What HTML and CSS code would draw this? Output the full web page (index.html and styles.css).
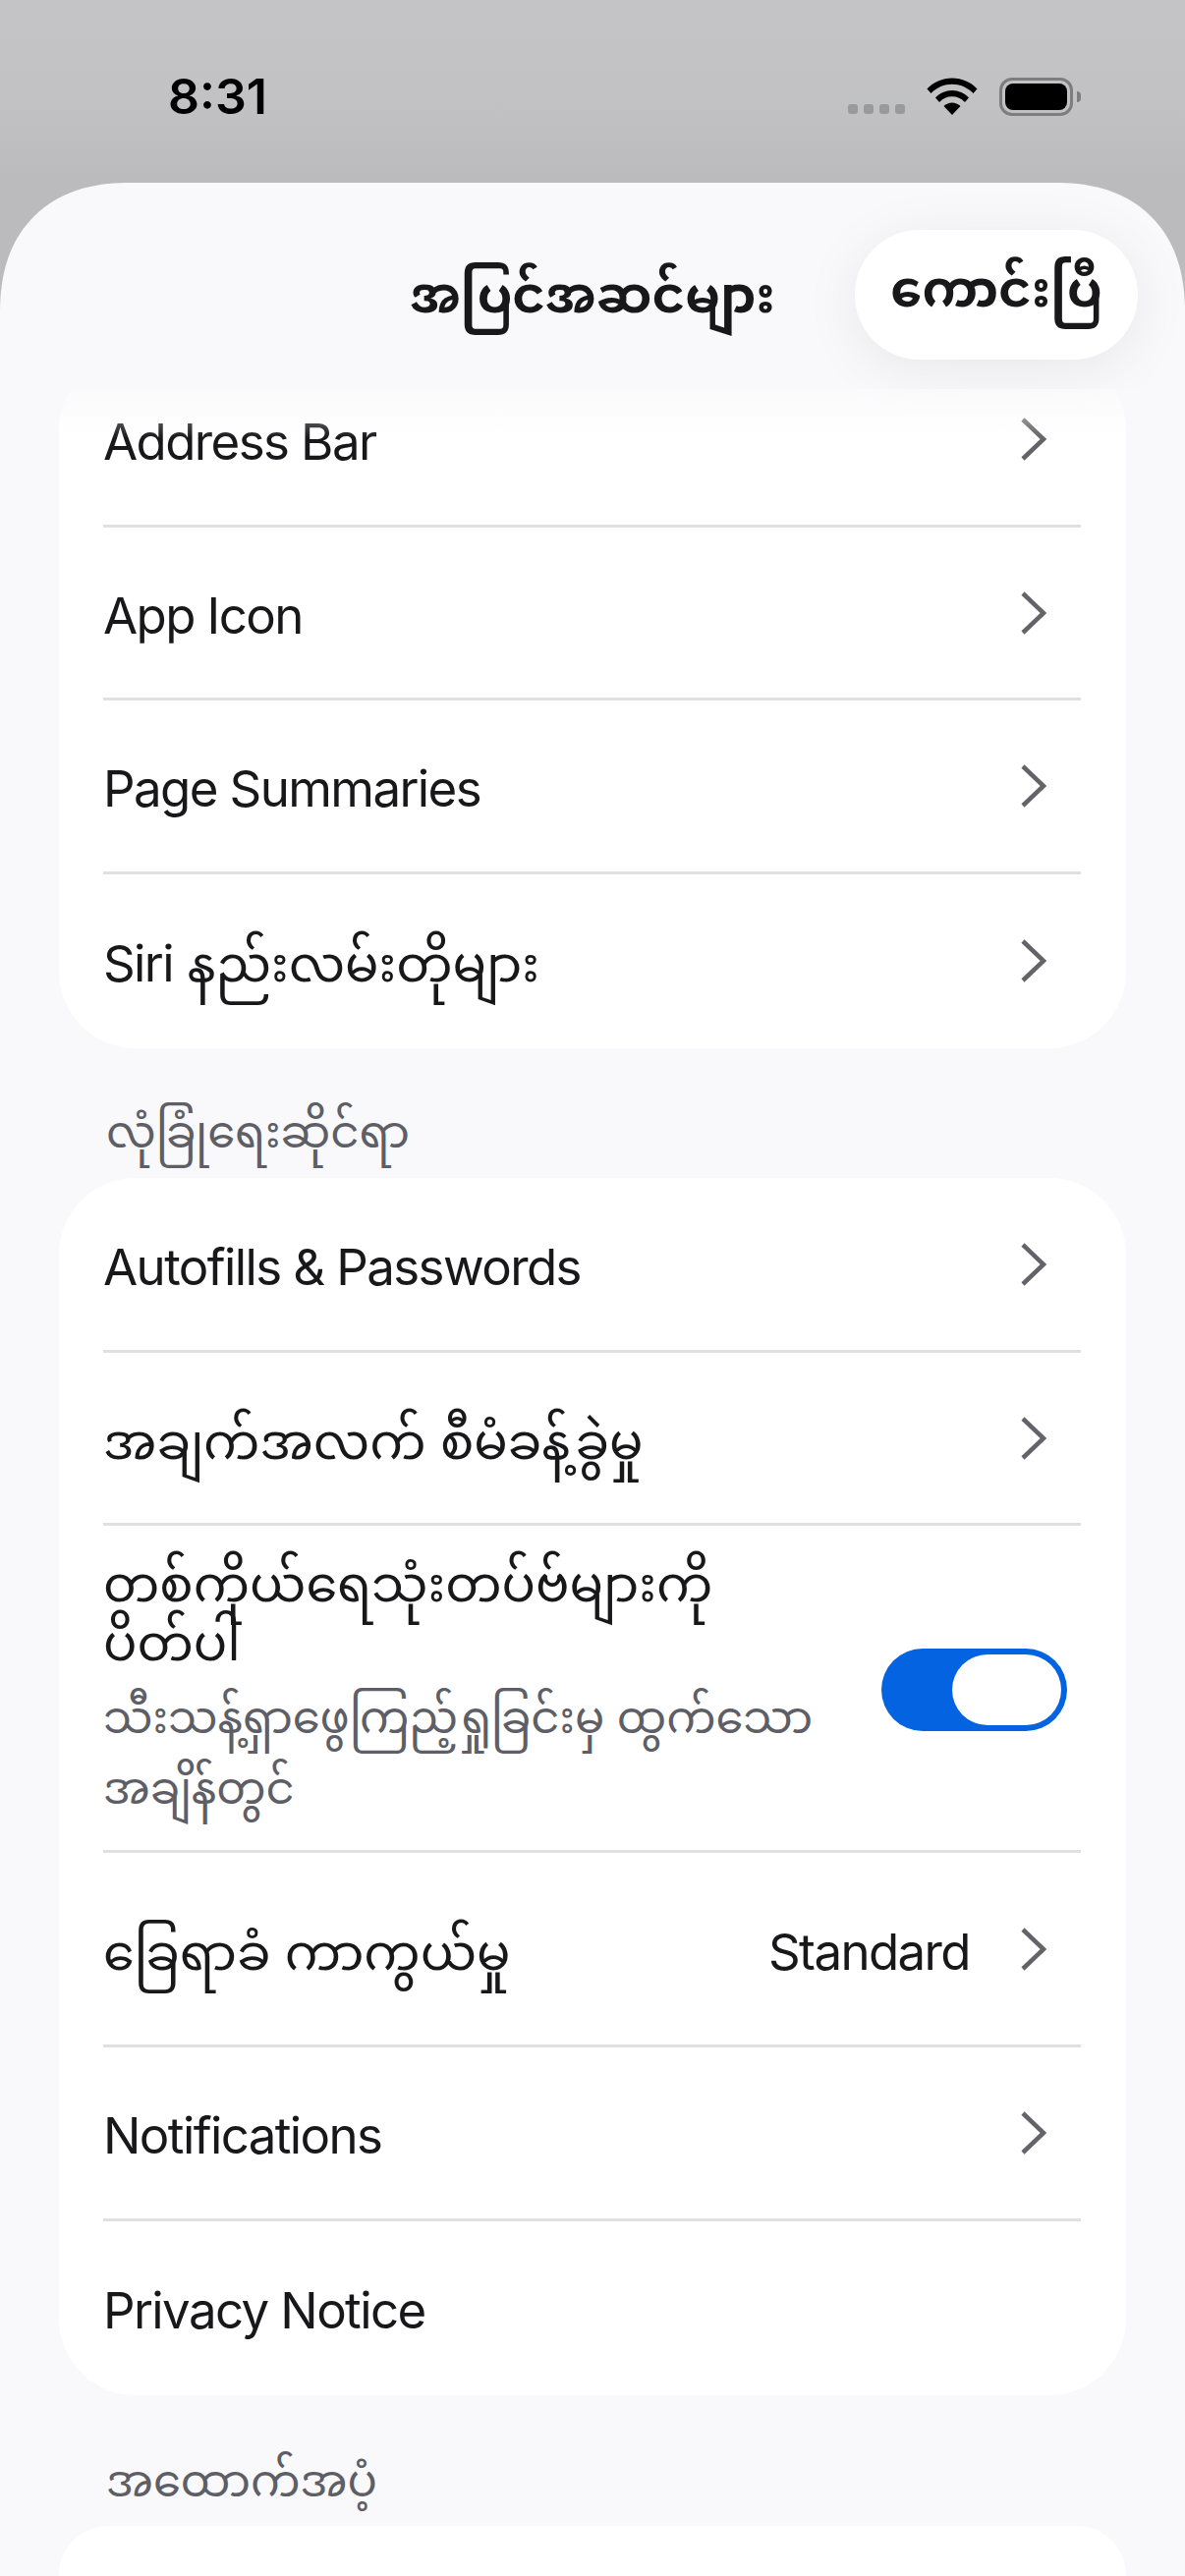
FILE: index.html
```html
<!DOCTYPE html>
<html lang="my">
<head>
<meta charset="utf-8">
<title>အပြင်အဆင်များ</title>
<link rel="stylesheet" href="styles.css">
</head>
<body>
<div class="screen">
  <div class="status">
    <span class="time">8:31</span>
    <div class="status-icons">
      <div class="dots"><i></i><i></i><i></i><i></i></div>
      <svg class="wifi" width="52" height="38" viewBox="0 0 52 38"><path d="M0.5 11.5C7 4.5 16 0.5 26 0.5S45 4.5 51.5 11.5L47.5 16C41.5 10 34 6.8 26 6.8S10.5 10 4.5 16Z"/><path d="M9 20.5C13.5 15.8 19.5 13 26 13S38.5 15.8 43 20.5L39 25C35.5 21.3 31 19.3 26 19.3S16.5 21.3 13 25Z"/><path d="M17.5 29C20 26.7 23 25.5 26 25.5S32 26.7 34.500 29L26 38Z"/></svg>
      <div class="battery"><div class="battery-fill"></div></div>
      <div class="battery-nub"></div>
    </div>
  </div>
  <div class="sheet">
    <header class="nav">
      <h1 class="nav-title">အပြင်အဆင်များ</h1>
      <button class="done">ကောင်းပြီ</button>
    </header>
    <main class="scroll">
      <section class="card card-clipped">
        <div class="row"><span class="label"><span class="latin">Address Bar</span></span><svg class="chev" viewBox="0 0 28 46"><path d="M3 3L24 23L3 43"/></svg></div>
        <div class="row"><span class="label"><span class="latin">App Icon</span></span><svg class="chev" viewBox="0 0 28 46"><path d="M3 3L24 23L3 43"/></svg></div>
        <div class="row"><span class="label"><span class="latin">Page Summaries</span></span><svg class="chev" viewBox="0 0 28 46"><path d="M3 3L24 23L3 43"/></svg></div>
        <div class="row row-end"><span class="label"><span class="latin">Siri</span> နည်းလမ်းတိုများ</span><svg class="chev" viewBox="0 0 28 46"><path d="M3 3L24 23L3 43"/></svg></div>
      </section>
      <h2 class="section-head section-head-first">လုံခြုံရေးဆိုင်ရာ</h2>
      <section class="card">
        <div class="row"><span class="label"><span class="latin">Autofills &amp; Passwords</span></span><svg class="chev" viewBox="0 0 28 46"><path d="M3 3L24 23L3 43"/></svg></div>
        <div class="row"><span class="label">အချက်အလက် စီမံခန့်ခွဲမှု</span><svg class="chev" viewBox="0 0 28 46"><path d="M3 3L24 23L3 43"/></svg></div>
        <div class="row row-tall">
          <div class="tall-text">
            <div class="tall-title">တစ်ကိုယ်ရေသုံးတပ်ဗ်များကို ပိတ်ပါ</div>
            <div class="tall-sub">သီးသန့်ရှာဖွေကြည့်ရှုခြင်းမှ ထွက်သော အချိန်တွင်</div>
          </div>
          <div class="toggle"><div class="knob"></div></div>
        </div>
        <div class="row row-mid"><span class="label">ခြေရာခံ ကာကွယ်မှု</span><span class="value latin">Standard</span><svg class="chev" viewBox="0 0 28 46"><path d="M3 3L24 23L3 43"/></svg></div>
        <div class="row"><span class="label"><span class="latin">Notifications</span></span><svg class="chev" viewBox="0 0 28 46"><path d="M3 3L24 23L3 43"/></svg></div>
        <div class="row row-end"><span class="label"><span class="latin">Privacy Notice</span></span></div>
      </section>
      <h2 class="section-head section-head-second">အထောက်အပံ့</h2>
      <section class="card card-last"></section>
    </main>
  </div>
</div>
</body>
</html>
```
FILE: styles.css
```css
* { box-sizing: border-box; }
html, body { margin: 0; padding: 0; }
body { width: 1206px; height: 2622px; overflow: hidden; font-family: Inter, "Noto Sans Myanmar", "Padauk", "Noto Sans", sans-serif; color: #18181b; }
.screen { width: 1206px; height: 2622px; display: flex; flex-direction: column; background: linear-gradient(#c4c4c6, #c2c2c4 100px, #bbbbbd 186px); }
.status { height: 186px; flex: none; display: flex; justify-content: space-between; align-items: flex-start; padding: 70px 106px 0 171px; }
.time { font-size: 50px; font-weight: 600; line-height: 56px; color: #000; }
.status-icons { display: flex; align-items: flex-start; padding-top: 9px; }
.dots { display: flex; gap: 6px; margin-top: 27px; margin-right: 22px; }
.dots i { width: 10px; height: 10px; border-radius: 3px; background: #999a9c; }
.wifi { fill: #000; margin-right: 22px; }
.battery { width: 75px; height: 39px; border: 3px solid #7d7d7f; border-radius: 13px; padding: 3px; }
.battery-fill { width: 100%; height: 100%; background: #000; border-radius: 8px; }
.battery-nub { width: 4px; height: 11px; margin: 14px 0 0 4px; background: #7d7d7f; border-radius: 0 4px 4px 0; }
.sheet { flex: 1; min-height: 0; display: flex; flex-direction: column; background: #f9f9fb; border-radius: 132px 132px 0 0; corner-shape: superellipse(1.2); overflow: hidden; }
.nav { height: 210px; flex: none; position: relative; z-index: 1; display: flex; justify-content: center; align-items: flex-start; padding-top: 78px; }
.nav::after { content: ""; position: absolute; left: 0; right: 0; top: 100%; height: 50px; background: linear-gradient(rgba(249,249,251,.75), rgba(249,249,251,0)); }
.nav-title { margin: 0; font-size: 51px; font-weight: 700; line-height: 72px; color: #18181b; }
.done { position: absolute; left: 870px; top: 48px; width: 288px; height: 132px; border: 0; border-radius: 66px; background: #fff; box-shadow: 0 10px 60px rgba(0,0,0,.07); font-family: inherit; font-size: 51px; font-weight: 700; color: #18181b; padding: 0; }
.scroll { flex: 1; min-height: 0; overflow: hidden; padding: 0 60px; }
.card { background: #fff; border-radius: 78px; overflow: hidden; }
.card-clipped { margin-top: -37px; }
.card-last { height: 100px; }
.row { height: 176.500px; display: flex; align-items: center; padding: 0 40px 0 45px; position: relative; }
.row + .row::before { content: ""; position: absolute; left: 45px; right: 46px; top: -2px; height: 3px; background: #e0e0e4; }
.row-end { height: 178.500px; }
.row-tall { height: 333px; align-items: center; padding-right: 60px; }
.row-mid { height: 198px; }
.label { flex: 1; font-size: 51px; line-height: 60px; padding-top: 6px; }
.latin { letter-spacing: -1.600px; }
.value { font-size: 51px; line-height: 60px; padding-top: 6px; margin-right: 51px; color: #18181b; }
.chev { width: 28px; height: 46px; fill: none; stroke: #636369; stroke-width: 4.500; margin-right: 40px; flex: none; }
.tall-text { flex: 1; min-width: 0; }
.tall-title { font-size: 51px; line-height: 60px; width: 680px; }
.tall-sub { font-size: 44.800px; line-height: 72px; color: #5e5e66; width: 780px; margin-top: 10px; }
.toggle { width: 189px; height: 84px; flex: none; border-radius: 42px; background: #0363e0; padding: 6px; display: flex; justify-content: flex-end; margin-top: 2px; }
.knob { width: 111px; height: 72px; background: #fff; border-radius: 36px; }
.section-head { margin: 0; font-size: 45px; font-weight: 400; line-height: 70px; color: #5e5e66; padding-left: 48px; }
.section-head-first { height: 132px; padding-top: 50px; }
.section-head-second { height: 133px; padding-top: 52px; }
```
